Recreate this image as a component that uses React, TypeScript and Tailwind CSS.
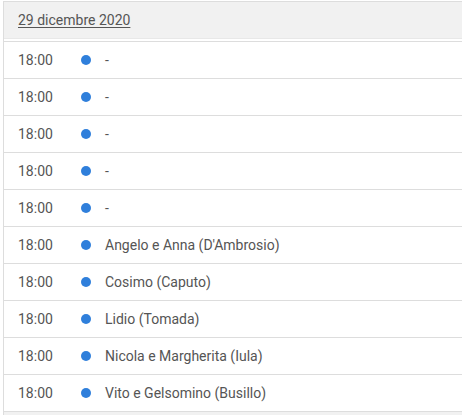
import React from 'react';

const rows = [
  '-',
  '-',
  '-',
  '-',
  '-',
  "Angelo e Anna (D'Ambrosio)",
  'Cosimo (Caputo)',
  'Lidio (Tomada)',
  'Nicola e Margherita (Iula)',
  'Vito e Gelsomino (Busillo)',
];

export default function App() {
  return (
    <div className="w-[462px] h-[416px] overflow-hidden bg-white pl-[3px] pt-px" style={{ fontFamily: 'Roboto, sans-serif' }}>
      <div className="border-l border-t border-[#dddddd]">
        <div className="h-[37px] bg-[#f1f1f1] border-b border-[#e8e8e8] flex items-center pl-[14px]">
          <span className="text-[14px] text-[#555555] underline underline-offset-2">29 dicembre 2020</span>
        </div>
        <div className="h-[2px]" />
        {rows.map((name, i) => (
          <div key={i} className="h-[37px] border-t border-[#dddddd] flex items-center text-[14px] text-[#555555]">
            <span className="w-[77px] pl-[14px]">18:00</span>
            <span className="w-[10px] h-[10px] rounded-full bg-[#2f7fdb]" />
            <span className="pl-[14px]">{name}</span>
          </div>
        ))}
        <div className="h-[4px] border-t border-[#dddddd] bg-[#f1f1f1]" />
      </div>
    </div>
  );
}
